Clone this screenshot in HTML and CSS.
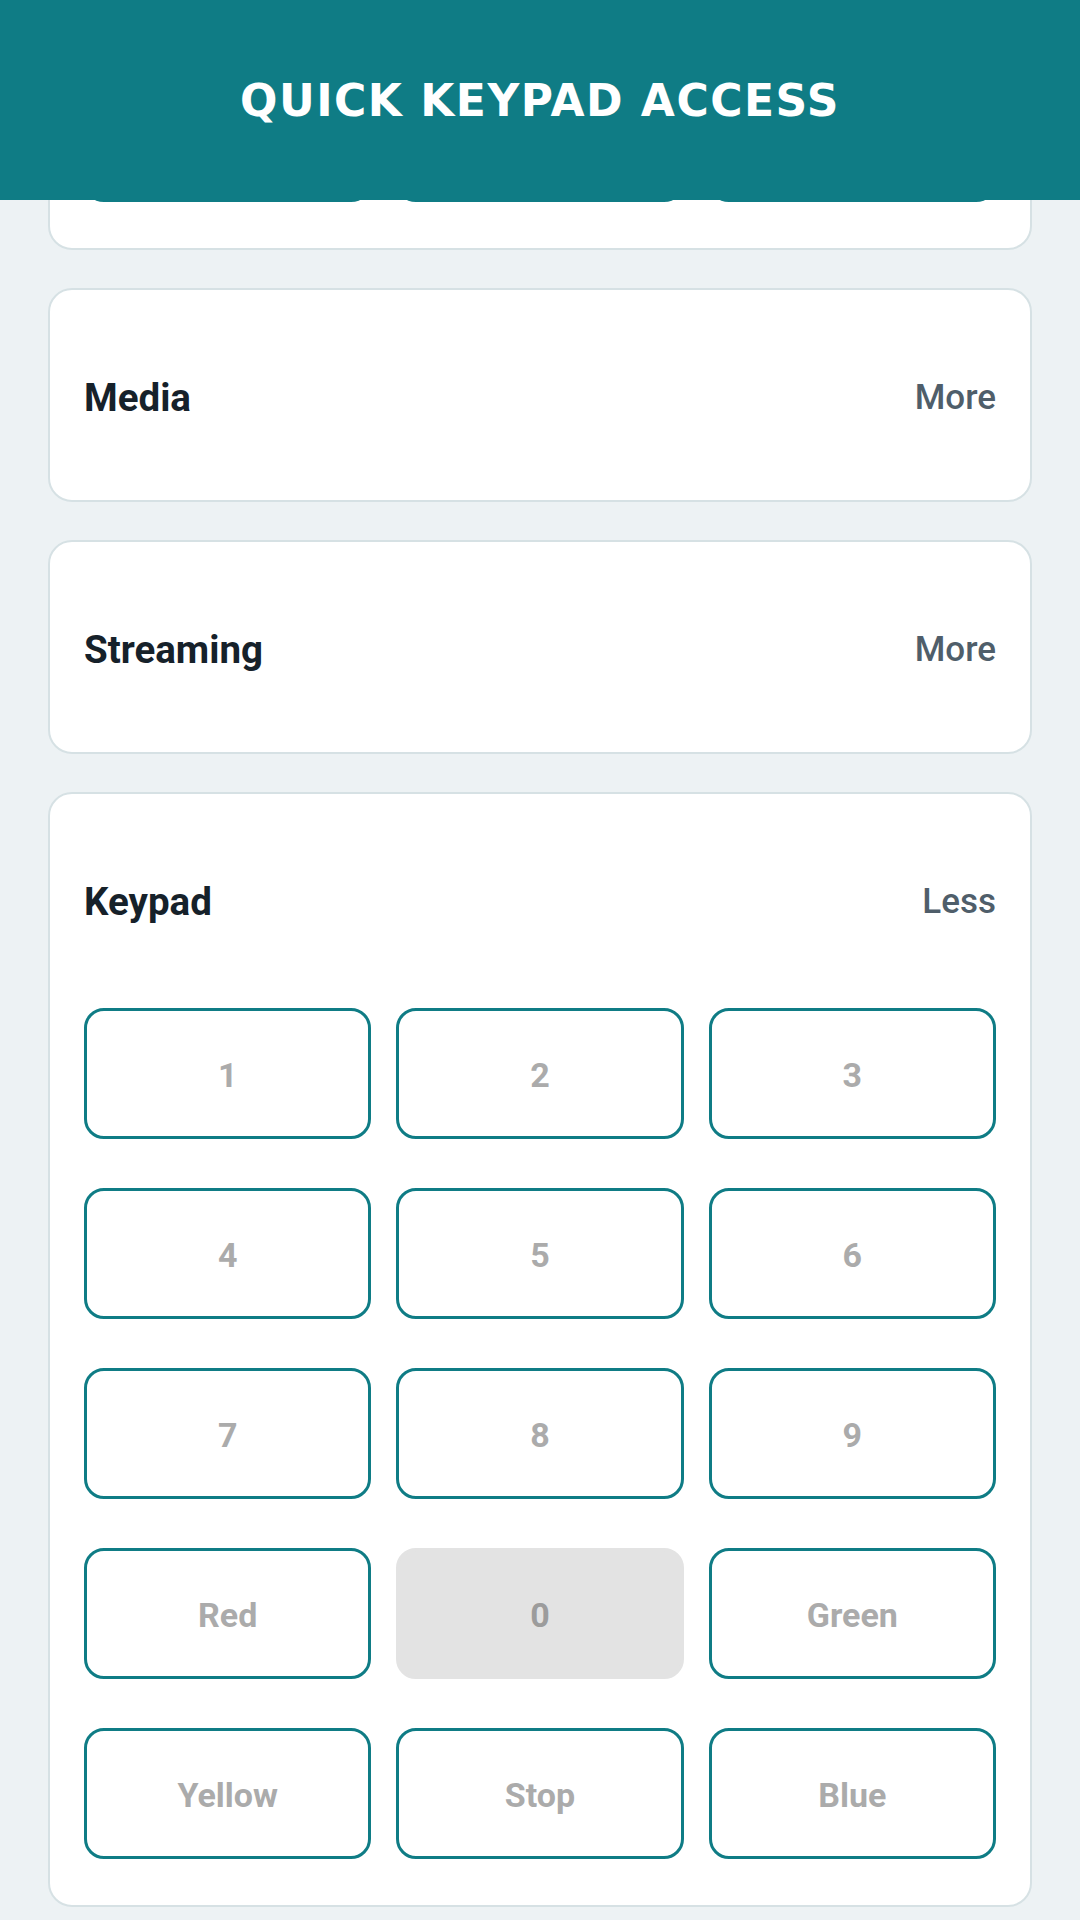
FILE: index.html
```html
<!DOCTYPE html>
<html lang="en">
<head>
<meta charset="UTF-8" />
<meta name="viewport" content="width=device-width, initial-scale=1.0"/>
<title>Quick Keypad Access</title>
<link rel="stylesheet" href="styles.css">
</head>
<body>

<header class="topbar">
  <h1>QUICK KEYPAD ACCESS</h1>
</header>

<main class="sections">
  <!-- tail of the section scrolled up under the bar -->
  <section class="card tail">
    <div class="keys">
      <button class="key" aria-label="Back"></button>
      <button class="key" aria-label="Home"></button>
      <button class="key" aria-label="Menu"></button>
    </div>
  </section>

  <section class="card collapsed">
    <div class="card-head">
      <h2>Media</h2>
      <span class="toggle">More</span>
    </div>
  </section>

  <section class="card collapsed">
    <div class="card-head">
      <h2>Streaming</h2>
      <span class="toggle">More</span>
    </div>
  </section>

  <section class="card">
    <div class="card-head">
      <h2>Keypad</h2>
      <span class="toggle">Less</span>
    </div>
    <div class="keys">
      <button class="key">1</button>
      <button class="key">2</button>
      <button class="key">3</button>
      <button class="key">4</button>
      <button class="key">5</button>
      <button class="key">6</button>
      <button class="key">7</button>
      <button class="key">8</button>
      <button class="key">9</button>
      <button class="key">Red</button>
      <button class="key zero">0</button>
      <button class="key">Green</button>
      <button class="key">Yellow</button>
      <button class="key">Stop</button>
      <button class="key">Blue</button>
    </div>
  </section>
</main>

</body>
</html>
```

FILE: styles.css
```css
body {
  margin: 0;
  background-color: #edf2f4;
  font-family: Roboto, "Noto Sans", sans-serif;
  overflow: hidden;
}
.topbar {
  position: fixed;
  top: 0;
  left: 0;
  right: 0;
  height: 200px;
  background-color: #0f7c85;
  display: flex;
  align-items: center;
  justify-content: center;
  z-index: 2;
}
.topbar h1 {
  margin: 0;
  font-family: "DejaVu Sans", sans-serif;
  font-weight: bold;
  font-size: 44px;
  letter-spacing: 1.5px;
  color: #fff;
}
.sections {
  display: flex;
  flex-direction: column;
  gap: 38px;
  padding: 69px 48px 0;
}
.card {
  background-color: #fff;
  border: 2px solid #d6e1e4;
  border-radius: 24px;
  padding: 0 34px 46px;
}
.card.collapsed {
  padding-bottom: 0;
}
.card-head {
  height: 205px;
  padding-top: 5px;
  display: flex;
  align-items: center;
  justify-content: space-between;
}
.card-head h2 {
  margin: 0;
  font-size: 38.5px;
  font-weight: 700;
  color: #16212a;
}
.toggle {
  font-size: 35px;
  font-weight: 500;
  color: #4f5e6a;
}
.keys {
  display: grid;
  grid-template-columns: repeat(3, 1fr);
  column-gap: 25px;
  row-gap: 49px;
  margin-top: 4px;
}
.tail .keys {
  margin-top: 0;
}
.key {
  height: 131px;
  border: 3px solid #0f7c85;
  border-radius: 20px;
  background-color: #fff;
  font-family: Roboto, "Noto Sans", sans-serif;
  font-size: 34px;
  font-weight: 700;
  color: #ababab;
  padding: 2px 0 0;
}
.key.zero {
  background-color: #e3e3e3;
  border-color: #e3e3e3;
  color: #9c9c9c;
}
```
